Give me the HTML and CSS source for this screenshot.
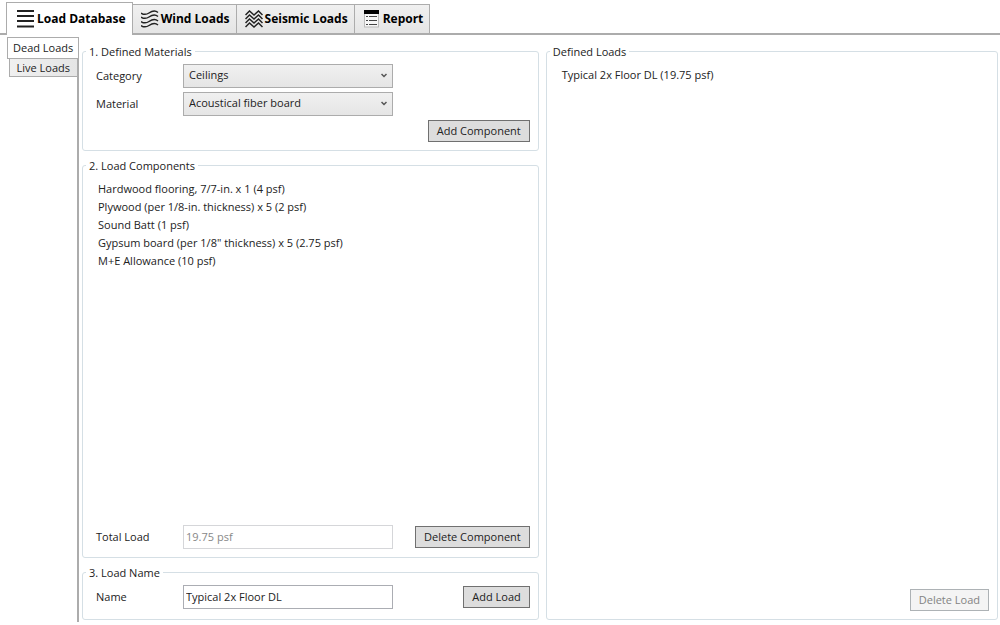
FILE: index.html
```html
<!DOCTYPE html>
<html lang="en">
<head>
    <meta charset="UTF-8">
    <meta name="viewport" content="width=device-width, initial-scale=1.0">
    <title>Load Database</title>
    <link rel="stylesheet" href="styles.css">
</head>
<body>
    <nav class="tabs">
        <button type="button" class="tab active">
            <svg class="icon" width="18" height="18" viewBox="0 0 18 18" stroke="#222" stroke-width="1.8">
                <path d="M0 1H17M0 6H17M0 11H17M0 16.5H17"/>
            </svg>
            Load Database
        </button>
        <button type="button" class="tab">
            <svg class="icon" width="18" height="18" viewBox="0 0 18 18" fill="none" stroke="#222" stroke-width="1.5">
                <path d="M0 3C3 5 5 5 8 3S14 0 17 2.5"/>
                <path d="M0 7C3 9 5 9 8 7S14 4 17 6.5"/>
                <path d="M0 11.5C3 13.5 5 13.5 8 11.5S14 8.500 17 11"/>
                <path d="M0 15.500C3 17.500 5 17.500 8 15.500S14 12.500 17 15"/>
            </svg>
            Wind Loads
        </button>
        <button type="button" class="tab">
            <svg class="icon" width="18" height="18" viewBox="0 0 18 18" fill="none" stroke="#222" stroke-width="1.5">
                <path d="M.5 5L4.500 1L9 5L13.500 1L17.500 5"/>
                <path d="M.5 9L4.500 5L9 9L13.500 5L17.500 9"/>
                <path d="M.5 13L4.500 9L9 13L13.500 9L17.500 13"/>
                <path d="M.5 17L4.500 13L9 17L13.500 13L17.500 17"/>
            </svg>
            Seismic Loads
        </button>
        <button type="button" class="tab">
            <svg class="icon" width="18" height="18" viewBox="0 0 18 18">
                <rect x="1.500" y="1.500" width="14" height="15.500" fill="#f6f6f6" stroke="#bbb"/>
                <rect x="1" y="0" width="15" height="4" fill="#000"/>
                <path d="M3 6.500H5M3 10.500H5M3 14.500H5M6 6.500H14M6 10.500H14M6 14.500H14" stroke="#444"/>
            </svg>
            Report
        </button>
    </nav>

    <main class="page">
        <nav class="side-tabs">
            <button type="button" class="side-tab active">Dead Loads</button>
            <button type="button" class="side-tab">Live Loads</button>
        </nav>

        <div class="content">
            <div class="column">
                <fieldset class="group">
                    <legend>1. Defined Materials</legend>
                    <div class="form">
                        <label for="category">Category</label>
                        <div class="select">
                            <select id="category">
                                <option>Ceilings</option>
                            </select>
                            <svg class="arrow" width="6" height="5" viewBox="0 0 6 5" fill="none" stroke="#555" stroke-width="1.5"><path d="M.5 1L3 3.5L5.500 1"/></svg>
                        </div>
                        <label for="material" class="next-row">Material</label>
                        <div class="select">
                            <select id="material">
                                <option>Acoustical fiber board</option>
                            </select>
                            <svg class="arrow" width="6" height="5" viewBox="0 0 6 5" fill="none" stroke="#555" stroke-width="1.5"><path d="M.5 1L3 3.5L5.500 1"/></svg>
                        </div>
                        <button type="button" class="btn own-row">Add Component</button>
                    </div>
                </fieldset>

                <fieldset class="group grow">
                    <legend>2. Load Components</legend>
                    <ul class="list">
                        <li>Hardwood flooring, 7/7-in. x 1 (4 psf)</li>
                        <li>Plywood (per 1/8-in. thickness) x 5 (2 psf)</li>
                        <li>Sound Batt (1 psf)</li>
                        <li>Gypsum board (per 1/8" thickness) x 5 (2.75 psf)</li>
                        <li>M+E Allowance (10 psf)</li>
                    </ul>
                    <div class="form">
                        <label for="total">Total Load</label>
                        <input type="text" id="total" value="19.75 psf" disabled>
                        <button type="button" class="btn">Delete Component</button>
                    </div>
                </fieldset>

                <fieldset class="group load-name">
                    <legend>3. Load Name</legend>
                    <div class="form">
                        <label for="name">Name</label>
                        <input type="text" id="name" value="Typical 2x Floor DL">
                        <button type="button" class="btn">Add Load</button>
                    </div>
                </fieldset>
            </div>

            <div class="column">
                <fieldset class="group grow">
                    <legend>Defined Loads</legend>
                    <ul class="list">
                        <li>Typical 2x Floor DL (19.75 psf)</li>
                    </ul>
                    <button type="button" class="btn" disabled>Delete Load</button>
                </fieldset>
            </div>
        </div>
    </main>
</body>
</html>
```
FILE: styles.css
```css
* {
    box-sizing: border-box;
}

body {
    display: flex;
    flex-direction: column;
    min-height: 100vh;
    margin: 0;
    padding-top: 2px;
    background-color: #fff;
    color: #222;
    font-family: "Open Sans", "Noto Sans", sans-serif;
    font-size: 11px;
    line-height: 16px;
}

button, input, select {
    font: inherit;
    color: inherit;
}

/* top tabs */
.tabs {
    display: flex;
    align-items: flex-end;
    padding-left: 6px;
    border-bottom: 2px solid #acacac;
}

.tab {
    display: flex;
    align-items: center;
    gap: 2px;
    height: 30px;
    margin: 0 0 -1px -1px;
    padding: 0 6px 0 8px;
    border: 1px solid #acacac;
    background: linear-gradient(#f0f0f0, #e5e5e5);
    color: #000;
    font-size: 12px;
    font-weight: bold;
    white-space: nowrap;
}

.tab.active {
    height: 33px;
    margin: 0 0 -2px;
    padding: 0 6px 0 10px;
    border-bottom: none;
    background: #fff;
}

.icon {
    flex: none;
}

.page {
    display: flex;
    flex: 1;
    padding: 2px 2px 3px 7px;
}

/* side tabs */
.side-tabs {
    display: flex;
    flex-direction: column;
    align-items: flex-end;
    width: 72px;
    border-right: 2px solid #acacac;
}

.side-tab {
    height: 18px;
    padding: 0 7px;
    border: 1px solid #acacac;
    border-width: 0 0 1px 1px;
    background: linear-gradient(to right, #f0f0f0, #e5e5e5);
    line-height: 16px;
    white-space: nowrap;
}

.side-tab.active {
    width: 72px;
    height: 22px;
    margin-right: -2px;
    padding: 0 5px;
    border-width: 1px;
    background: #fff;
}

.content {
    display: grid;
    flex: 1;
    grid-template-columns: 101fr 100fr;
    gap: 7px;
    padding: 7px 0 2px 3px;
}

.column {
    display: flex;
    flex-direction: column;
    gap: 7px;
    min-width: 0;
}

/* group boxes */
.group {
    display: flex;
    flex-direction: column;
    min-width: 0;
    margin: 0;
    padding: 5px 8px 8px 13px;
    border: 1px solid #d5dfe5;
    border-radius: 3px;
}

.group.grow {
    flex: 1;
}

.group.load-name {
    padding-bottom: 10px;
}

.group legend {
    margin-left: -10px;
    padding: 0 3px;
    line-height: 15px;
}

.form {
    display: grid;
    grid-template-columns: 87px 210px 1fr;
    align-items: center;
    row-gap: 4px;
}

.next-row {
    grid-column: 1;
}

.own-row {
    grid-column: 3;
    grid-row: 3;
}

.select {
    position: relative;
}

.select select {
    display: block;
    width: 100%;
    height: 24px;
    padding: 0 20px 2px 5px;
    border: 1px solid #acacac;
    border-radius: 0;
    background: linear-gradient(#f0f0f0, #e5e5e5);
    appearance: none;
}

.arrow {
    position: absolute;
    top: 9px;
    right: 6px;
    pointer-events: none;
}

input {
    width: 100%;
    height: 24px;
    padding: 0 2px 2px;
    border: 1px solid #abadb3;
    background-color: #fff;
}

input:disabled {
    border-color: #d5d6d9;
    color: #888;
}

.btn {
    justify-self: end;
    height: 22px;
    padding: 0 8px;
    border: 1px solid #707070;
    background-color: #ddd;
    line-height: 20px;
    white-space: nowrap;
}

.list + .btn {
    align-self: flex-end;
}

.btn:disabled {
    border-color: #adb2b5;
    background-color: #f4f4f4;
    color: #838383;
}

.list {
    flex: 1;
    margin: 0;
    padding: 2px;
    list-style: none;
    line-height: 18px;
}
```
